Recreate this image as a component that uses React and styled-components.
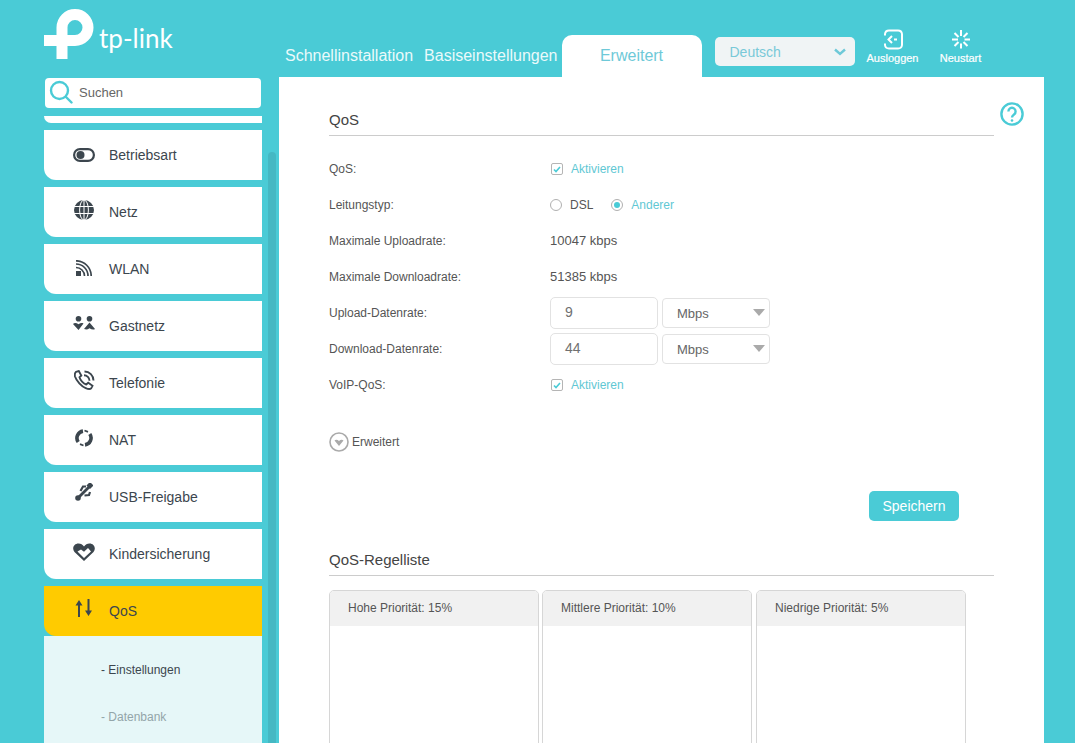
import styled, { createGlobalStyle } from "styled-components";

const TEAL = "#4acbd6";
const DARK = "#3c464e";

const GlobalStyle = createGlobalStyle`
  html, body {
    margin: 0;
    height: 100%;
    overflow: hidden;
    background: ${TEAL};
    font-family: "Liberation Sans", Arial, sans-serif;
  }
`;

const Page = styled.div`
  height: 743px;
  display: flex;
  flex-direction: column;
  overflow: hidden;
`;

const Header = styled.header`
  height: 77px;
  flex: none;
  display: flex;
  align-items: flex-end;
  padding-left: 44px;
`;

const Logo = styled.div`
  width: 241px;
  height: 77px;
  display: flex;
  align-items: flex-start;
  padding-top: 8px;
  box-sizing: border-box;
  color: #fff;
`;

const LogoText = styled.span`
  font-family: "Lato", sans-serif;
  font-size: 26px;
  line-height: 30px;
  margin: 15px 0 0 5px;
`;

const NavItem = styled.a`
  height: 42px;
  line-height: 42px;
  font-size: 16px;
  color: ${(p) => (p.$active ? "#6ec9d8" : "#eafafb")};
  background: ${(p) => (p.$active ? "#fff" : "transparent")};
  border-radius: 10px 10px 0 0;
  width: ${(p) => (p.$active ? "140px" : "auto")};
  text-align: center;
  margin-right: ${(p) => p.$gap || "0"};
`;

const LangSelect = styled.div`
  width: 140px;
  height: 29px;
  margin-bottom: 11px;
  background: #f0f4f5;
  border-radius: 5px;
  display: flex;
  align-items: center;
  justify-content: space-between;
  padding: 0 9px 0 15px;
  box-sizing: border-box;
  color: #79c9d8;
  font-size: 14px;
`;

const HeaderAction = styled.div`
  width: 68px;
  margin-bottom: 12px;
  display: flex;
  flex-direction: column;
  align-items: center;
  color: #fff;
  font-size: 11px;
  line-height: 13px;
  -webkit-text-stroke: 0.2px #fff;
  gap: 2px;
`;

const HeaderActions = styled.div`
  display: flex;
  margin-left: 4px;
`;

const Content = styled.div`
  flex: 1;
  display: flex;
  min-height: 0;
`;

const Sidebar = styled.aside`
  width: 279px;
  flex: none;
  padding-left: 44px;
  box-sizing: border-box;
  display: flex;
  gap: 6px;
`;

const SideColumn = styled.div`
  width: 218px;
  flex: none;
`;

const Search = styled.div`
  margin: 1px 1px 8px 1px;
  height: 30px;
  padding: 0 0 2px 4px;
  box-sizing: border-box;
  background: #fff;
  border-radius: 4px;
  display: flex;
  align-items: center;
  gap: 6px;
  font-size: 13px;
  color: #666;
`;

const Menu = styled.nav`
  display: flex;
  flex-direction: column;
  gap: 7px;
`;

const Sliver = styled.div`
  height: 7px;
  background: #fff;
  border-bottom-left-radius: 8px;
`;

const MenuRow = styled.div`
  height: 50px;
  background: ${(p) => (p.$active ? "#ffcb00" : "#fff")};
  border-bottom-left-radius: 12px;
  display: flex;
  align-items: center;
  color: ${DARK};
  font-size: 14px;
  box-sizing: border-box;
`;

const MenuIcon = styled.span`
  width: 80px;
  height: 22px;
  flex: none;
  display: flex;
  justify-content: center;
  align-items: center;
  margin-top: ${(p) => p.$lift * -2}px;
  margin-right: -15px;
`;

const SubMenu = styled.div`
  background: #e6f7f8;
  margin-top: -7px;
  padding: 11px 0 0 57px;
  height: 120px;
`;

const SubItem = styled.div`
  height: 47px;
  line-height: 47px;
  font-size: 12px;
  color: ${(p) => (p.$active ? DARK : "#93a5a9")};
`;

const Scrollbar = styled.div`
  width: 8px;
  margin-top: 75px;
  background: #45b8c3;
  border-radius: 4px 4px 0 0;
`;

const Main = styled.main`
  flex: 1;
  margin-right: 31px;
  background: #fff;
  padding: 0 50px;
  position: relative;
  color: #555;
`;

const Help = styled.div`
  position: absolute;
  top: 25px;
  right: 20px;
  line-height: 0;
`;

const SectionTitle = styled.h2`
  margin: 0;
  font-size: 15px;
  font-weight: normal;
  color: #444;
  height: ${(p) => p.$height || "59px"};
  padding-bottom: 7px;
  box-sizing: border-box;
  display: flex;
  align-items: flex-end;
  border-bottom: 1px solid #ccc;
`;

const Form = styled.div`
  margin-top: 15px;
`;

const Row = styled.div`
  height: 36px;
  display: flex;
  align-items: center;
  font-size: 12px;
`;

const Label = styled.div`
  width: 221px;
  flex: none;
  color: #555;
`;

const Value = styled.div`
  color: #555;
  font-size: 13px;
  margin-top: -2px;
`;

const Box = styled.span`
  width: 12px;
  height: 12px;
  border: 1px solid #b5b5b5;
  border-radius: 2px;
  box-sizing: border-box;
  margin-left: 1px;
  margin-right: 8px;
  display: inline-flex;
  align-items: center;
  justify-content: center;
`;

const Circle = styled.span`
  width: 12px;
  height: 12px;
  border: 1px solid #b0b0b0;
  border-radius: 50%;
  box-sizing: border-box;
  margin-right: 8px;
  display: inline-flex;
  align-items: center;
  justify-content: center;
  &::after {
    content: "";
    width: 6px;
    height: 6px;
    border-radius: 50%;
    background: ${(p) => (p.$on ? TEAL : "transparent")};
  }
`;

const Option = styled.span`
  display: inline-flex;
  align-items: center;
  margin-right: 18px;
  color: ${(p) => (p.$on ? "#5fc8d4" : "#555")};
`;

const Input = styled.div`
  width: 108px;
  height: 32px;
  border: 1px solid #e2e2e2;
  border-radius: 5px;
  box-sizing: border-box;
  font-size: 14px;
  line-height: 29px;
  padding-left: 14px;
  color: #707070;
  margin-right: 4px;
`;

const UnitSelect = styled.div`
  width: 108px;
  height: 30px;
  border: 1px solid #e2e2e2;
  border-radius: 4px;
  box-sizing: border-box;
  font-size: 13px;
  color: #666;
  display: flex;
  align-items: center;
  justify-content: space-between;
  padding: 0 4px 0 14px;
  &::after {
    content: "";
    border-left: 6px solid transparent;
    border-right: 6px solid transparent;
    border-top: 7px solid #aaa;
    margin-top: -2px;
  }
`;

const Toggle = styled.div`
  margin-top: 28px;
  height: 22px;
  display: flex;
  align-items: center;
  gap: 3px;
  font-size: 12px;
  color: #555;
`;

const Actions = styled.div`
  margin-top: 38px;
  display: flex;
  justify-content: flex-end;
  padding-right: 35px;
`;

const SaveButton = styled.button`
  width: 90px;
  height: 30px;
  border: 0;
  border-radius: 5px;
  background: ${TEAL};
  color: #fff;
  font: 14px "Liberation Sans", Arial, sans-serif;
`;

const Columns = styled.div`
  margin-top: 14px;
  display: flex;
  gap: 3px;
`;

const Column = styled.section`
  width: 210px;
  height: 200px;
  border: 1px solid #d6d6d6;
  border-radius: 5px 5px 0 0;
  box-sizing: border-box;
  margin-right: ${(p) => (p.$wide ? "1px" : "0")};
`;

const ColumnHead = styled.div`
  height: 35px;
  line-height: 35px;
  padding-left: 18px;
  background: #f1f1f1;
  border-radius: 4px 4px 0 0;
  font-size: 12px;
  color: #555;
`;

const TpLogo = () => (
  <svg width="50" height="51" viewBox="44 8 50 51" fill="none" stroke="#fff" strokeWidth="11">
    <path d="M62 59V27.500a13 13 0 1 1 13 13H44" />
  </svg>
);

const SearchIcon = () => (
  <svg width="24" height="24" viewBox="0 0 24 24" fill="none" stroke={TEAL} strokeWidth="2.4">
    <circle cx="10.500" cy="10.500" r="8.500" />
    <path d="M17 17l5.500 5.500" strokeLinecap="round" />
  </svg>
);

const Chevron = () => (
  <svg width="12" height="8" viewBox="0 0 12 8" fill="none" stroke="#6ec9d8" strokeWidth="2.4">
    <path d="M1 1.500l5 4.500 5-4.500" />
  </svg>
);

const LogoutIcon = () => (
  <svg width="20" height="21" viewBox="0 0 20 21" fill="none" stroke="#fff" strokeWidth="2">
    <path d="M2 6.500V5a4 4 0 0 1 4-3.500h9a4 4 0 0 1 4 3.500v11a4 4 0 0 1-4 3.500H6a4 4 0 0 1-4-3.500v-1.500" />
    <path d="M9 7l-3.500 3.500L9 14" />
    <path d="M11 10.500h3" />
  </svg>
);

const RestartIcon = () => (
  <svg width="20" height="21" viewBox="0 0 20 21" fill="none" stroke="#fff" strokeWidth="2">
    <path d="M10 1v6M10 14.500v5M1 10.500h6M13.500 10.500H19M3.500 4l4 4M16.500 4l-4 4M3.500 17l4-4M16.500 17l-4-4" />
  </svg>
);

const HelpIcon = () => (
  <svg width="24" height="24" viewBox="0 0 24 24" fill="none" stroke={TEAL} strokeWidth="2.4">
    <circle cx="12" cy="12" r="10.600" />
    <path d="M8.400 9.400a3.600 3.600 0 1 1 5.600 3c-1.300.9-2 1.400-2 3" />
    <circle cx="12" cy="18.500" r="1.300" fill={TEAL} stroke="none" />
  </svg>
);

const Check = () => (
  <svg width="8" height="7" viewBox="0 0 8 7" fill="none" stroke={TEAL} strokeWidth="1.6">
    <path d="M1 3.500l2 2 4-4.500" />
  </svg>
);

const ExpandIcon = () => (
  <svg width="20" height="20" viewBox="0 0 20 20">
    <circle cx="10" cy="10" r="9" fill="none" stroke="#aaa" strokeWidth="1.6" />
    <path d="M5.500 8.500c1.400-1.200 3-.8 4.500.4 1.500-1.200 3.100-1.600 4.500-.4L10 14z" fill="#aaa" />
  </svg>
);

const ToggleIcon = () => (
  <svg width="22" height="14" viewBox="0 0 22 14">
    <rect x="1.100" y="1.100" width="19.800" height="11.800" rx="5.900" fill="none" stroke={DARK} strokeWidth="2.200" />
    <circle cx="7.500" cy="7" r="4" fill={DARK} />
  </svg>
);

const GlobeIcon = () => (
  <svg width="20" height="20" viewBox="0 0 20 20">
    <circle cx="10" cy="10" r="10" fill={DARK} />
    <g fill="none" stroke="#fff" strokeWidth="1">
      <ellipse cx="10" cy="10" rx="4.400" ry="10" />
      <path d="M10 0v20M0 6.500h20M0 13.500h20" />
    </g>
  </svg>
);

const WifiIcon = () => (
  <svg width="16" height="16" viewBox="0 0 16 16" fill="none" stroke={DARK} strokeWidth="1.700">
    <rect x="0" y="11" width="5" height="5" fill={DARK} stroke="none" />
    <path d="M0 7.500A8.500 8.500 0 0 1 8.500 16M0 4A12 12 0 0 1 12 16M0 .8A15.200 15.200 0 0 1 15.200 16" />
  </svg>
);

const GuestIcon = () => (
  <svg width="22" height="15" viewBox="0 0 22 15" fill={DARK}>
    <circle cx="5.500" cy="2.800" r="2.800" />
    <circle cx="16.500" cy="2.800" r="2.800" />
    <path d="M0 8c1.500-1.500 3.500-1 5.500.3 2-1.300 3.200-1.600 5-.8L5.500 14z" />
    <path d="M16.500 6.500L22 13c-1.500 1-3.500.5-5.500-.8-2 1.300-3.200 1.600-5.500.8z" />
  </svg>
);

const PhoneIcon = () => (
  <svg width="21" height="21" viewBox="0 0 21 21" fill="none" stroke={DARK} strokeWidth="1.900">
    <path d="M2 1.800L4.800 1l2.500 4.500-1.800 1.800c.7 2.800 3.800 6.200 6.800 7.200l1.900-1.800 4.300 3-1.300 2.600c-1 1-3 .9-5.500-.2C7.500 16.500 2.500 11 1 6.500.5 4.500 1 2.800 2 1.800z" />
    <path d="M10 5.200a5.500 5.500 0 0 1 5.500 5.500M10.500 1.500a9 9 0 0 1 9 9" />
  </svg>
);

const NatIcon = () => (
  <svg width="18" height="18" viewBox="0 0 18 18" fill="none" stroke={DARK} strokeWidth="3.600">
    <path d="M3.200 13A7 7 0 0 1 8 2.100M14.800 5A7 7 0 0 1 10 15.900" />
    <path d="M9.500 1.500L13 2.800M8.500 16.500L5 15.200" strokeWidth="1.800" />
  </svg>
);

const UsbIcon = () => (
  <svg width="18" height="18" viewBox="0 0 18 18" fill={DARK} stroke={DARK}>
    <circle cx="3" cy="15" r="2.800" stroke="none" />
    <path d="M3 15L15 3" strokeWidth="2.800" />
    <path d="M5.500 8L8 3.500h3M9.500 12.500l4.500-.5 1-3" fill="none" strokeWidth="2.200" />
    <rect x="12.500" y="0" width="5" height="5" stroke="none" transform="rotate(45 15 2.500)" />
  </svg>
);

const HeartIcon = () => (
  <svg width="22" height="18" viewBox="0 0 22 18">
    <path d="M11 18L1.500 9C-1.500 5 1 .5 5.500.5 8 .5 9.500 1.500 11 3.500 12.500 1.500 14 .5 16.500.5 21 .5 23.500 5 20.500 9z" fill={DARK} />
    <path d="M11 15L4.500 8.500 8 6.500l3 2.300L15 5l3 3.500z" fill="#fff" />
  </svg>
);

const UpDownIcon = () => (
  <svg width="18" height="18" viewBox="0 0 18 18" fill={DARK} stroke={DARK} strokeWidth="2">
    <path d="M4 18V4M13.500 0v13" fill="none" />
    <path d="M4 1L.5 6.500h7zM13.500 17L10 11.500h7z" stroke="none" />
  </svg>
);

const menuItems = [
  ["Betriebsart", <ToggleIcon />, 0],
  ["Netz", <GlobeIcon />, 2],
  ["WLAN", <WifiIcon />, 1],
  ["Gastnetz", <GuestIcon />, 3],
  ["Telefonie", <PhoneIcon />, 3],
  ["NAT", <NatIcon />, 2],
  ["USB-Freigabe", <UsbIcon />, 5],
  ["Kindersicherung", <HeartIcon />, 2],
];

const Checked = ({ children }) => (
  <Option $on>
    <Box>
      <Check />
    </Box>
    {children}
  </Option>
);

const App = () => {
  return (
    <Page>
      <GlobalStyle />
      <Header>
        <Logo>
          <TpLogo />
          <LogoText>tp-link</LogoText>
        </Logo>
        <NavItem $gap="11px">Schnellinstallation</NavItem>
        <NavItem $gap="4px">Basiseinstellungen</NavItem>
        <NavItem $active $gap="13px">Erweitert</NavItem>
        <LangSelect>
          Deutsch
          <Chevron />
        </LangSelect>
        <HeaderActions>
          <HeaderAction>
            <LogoutIcon />
            Ausloggen
          </HeaderAction>
          <HeaderAction>
            <RestartIcon />
            Neustart
          </HeaderAction>
        </HeaderActions>
      </Header>
      <Content>
        <Sidebar>
          <SideColumn>
            <Search>
              <SearchIcon />
              Suchen
            </Search>
            <Menu>
              <Sliver />
              {menuItems.map(([label, icon, lift]) => (
                <MenuRow key={label}>
                  <MenuIcon $lift={lift}>{icon}</MenuIcon>
                  {label}
                </MenuRow>
              ))}
              <MenuRow $active>
                <MenuIcon $lift={3}>
                  <UpDownIcon />
                </MenuIcon>
                QoS
              </MenuRow>
              <SubMenu>
                <SubItem $active>- Einstellungen</SubItem>
                <SubItem>- Datenbank</SubItem>
              </SubMenu>
            </Menu>
          </SideColumn>
          <Scrollbar />
        </Sidebar>
        <Main>
          <Help>
            <HelpIcon />
          </Help>
          <SectionTitle>QoS</SectionTitle>
          <Form>
            <Row>
              <Label>QoS:</Label>
              <Checked>Aktivieren</Checked>
            </Row>
            <Row>
              <Label>Leitungstyp:</Label>
              <Option>
                <Circle />
                DSL
              </Option>
              <Option $on>
                <Circle $on />
                Anderer
              </Option>
            </Row>
            <Row>
              <Label>Maximale Uploadrate:</Label>
              <Value>10047 kbps</Value>
            </Row>
            <Row>
              <Label>Maximale Downloadrate:</Label>
              <Value>51385 kbps</Value>
            </Row>
            <Row>
              <Label>Upload-Datenrate:</Label>
              <Input>9</Input>
              <UnitSelect>Mbps</UnitSelect>
            </Row>
            <Row>
              <Label>Download-Datenrate:</Label>
              <Input>44</Input>
              <UnitSelect>Mbps</UnitSelect>
            </Row>
            <Row>
              <Label>VoIP-QoS:</Label>
              <Checked>Aktivieren</Checked>
            </Row>
          </Form>
          <Toggle>
            <ExpandIcon />
            Erweitert
          </Toggle>
          <Actions>
            <SaveButton>Speichern</SaveButton>
          </Actions>
          <SectionTitle $height="55px">QoS-Regelliste</SectionTitle>
          <Columns>
            <Column>
              <ColumnHead>Hohe Priorität: 15%</ColumnHead>
            </Column>
            <Column $wide>
              <ColumnHead>Mittlere Priorität: 10%</ColumnHead>
            </Column>
            <Column>
              <ColumnHead>Niedrige Priorität: 5%</ColumnHead>
            </Column>
          </Columns>
        </Main>
      </Content>
    </Page>
  );
};

export default App;
